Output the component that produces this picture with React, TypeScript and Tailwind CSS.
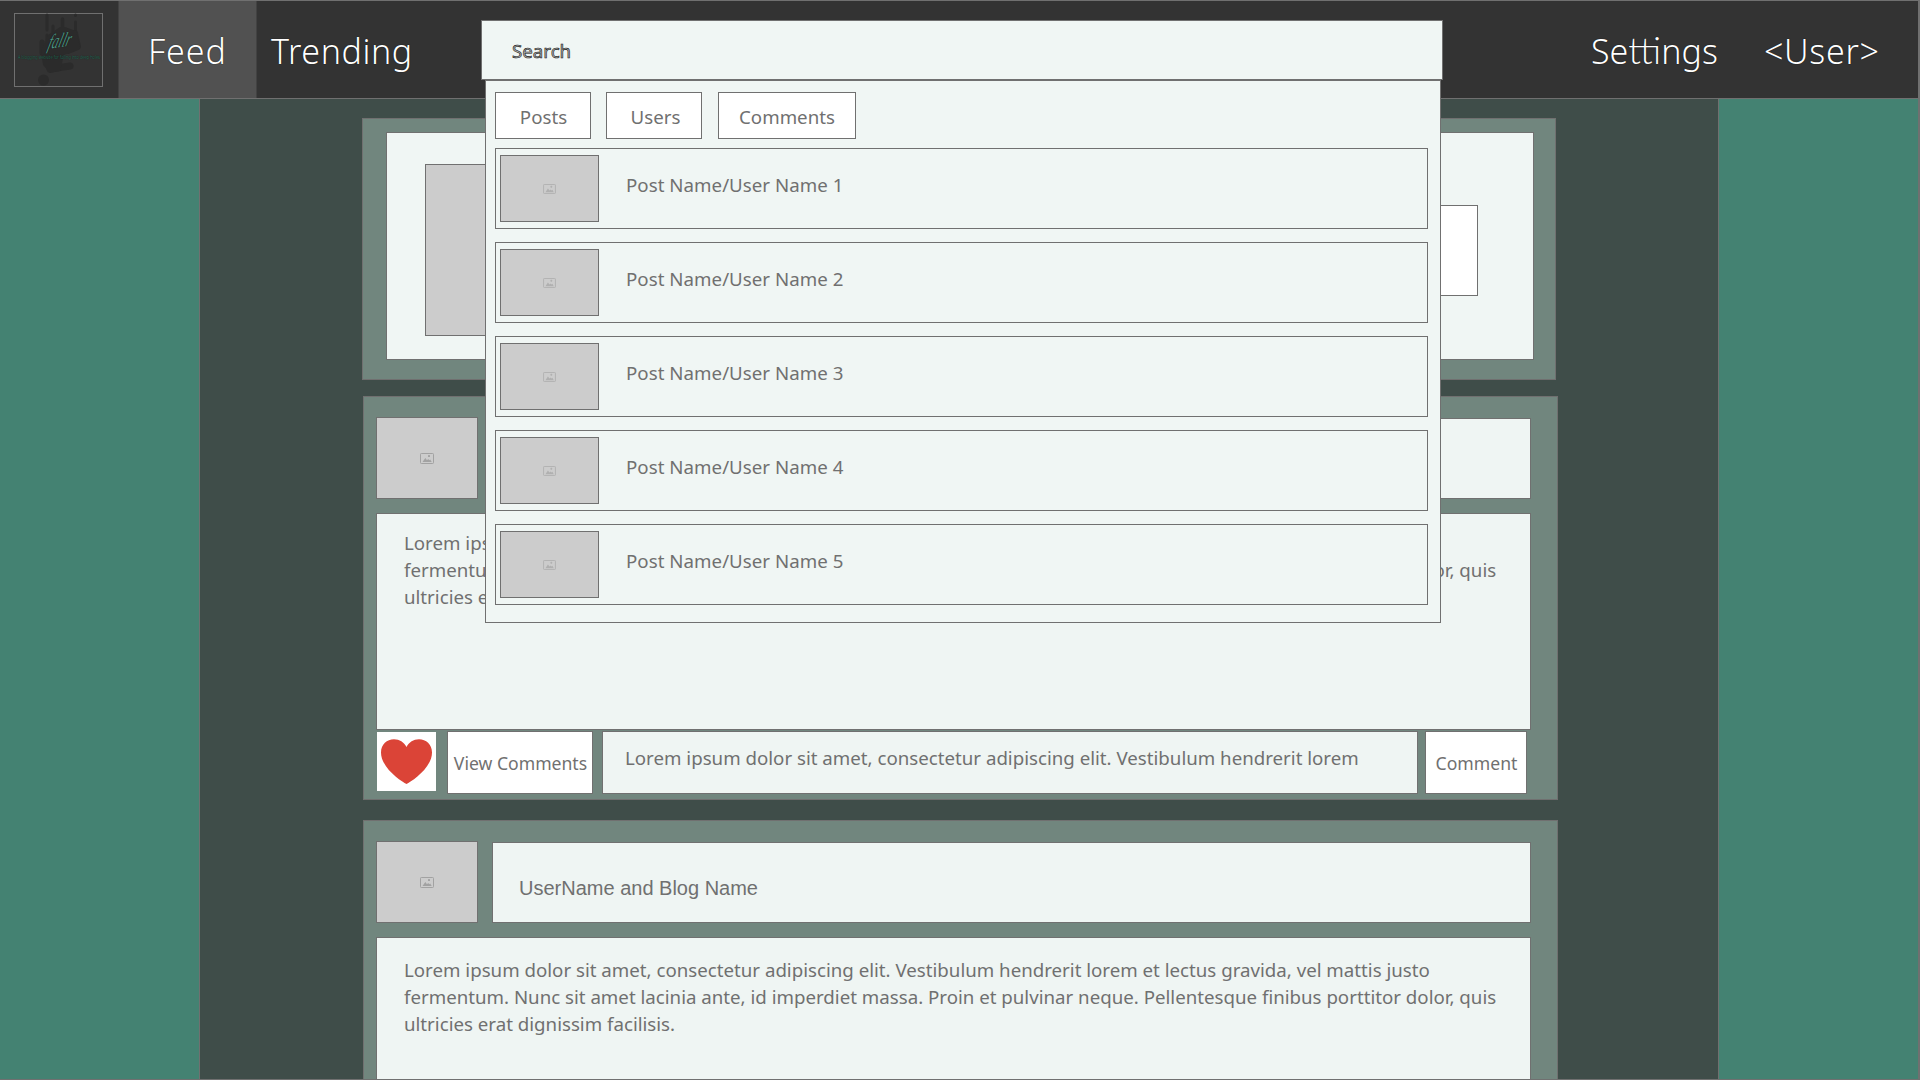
const LOREM_LINES = [
  "Lorem ipsum dolor sit amet, consectetur adipiscing elit. Vestibulum hendrerit lorem et lectus gravida, vel mattis justo",
  "fermentum. Nunc sit amet lacinia ante, id imperdiet massa. Proin et pulvinar neque. Pellentesque finibus porttitor dolor, quis",
  "ultricies erat dignissim facilisis.",
];

const RESULTS = [1, 2, 3, 4, 5];

function PictureIcon({ className }: { className: string }) {
  return (
    <svg viewBox="0 0 14 11" className={className} fill="none" aria-hidden="true">
      <rect x="0.5" y="0.5" width="13" height="10" rx="0.8" stroke="currentColor" />
      <path d="M2.5 9 L5.3 5 L7 7.2 L8.2 6 L9.3 7.2 L10.2 6.4 L11.7 9 Z" fill="currentColor" />
      <rect x="8" y="2" width="2" height="2" rx="0.6" fill="currentColor" />
    </svg>
  );
}

function Logo() {
  return (
    <svg viewBox="0 0 89 74" className="h-[74px] w-[89px] overflow-visible" aria-label="fallr">
      <rect x="0.5" y="0.5" width="88" height="73" fill="#333333" stroke="#707070" />
      <g stroke="#2b2b2b" strokeLinecap="round" fill="none">
        <path d="M33 2 V17 M33 22 V27" strokeWidth="3" />
        <path d="M39 13 V22" strokeWidth="3" />
        <path d="M48.5 6 V18" strokeWidth="3.4" />
        <path d="M61.500 9 V18 M61.500 2 V2.500" strokeWidth="3" />
        <path d="M28 29 V40" strokeWidth="5" />
        <path d="M34 40 L36 56 L56 53" strokeWidth="7" strokeLinejoin="round" />
        <path d="M54 38 L64 34 L61 20" strokeWidth="6" strokeLinejoin="round" />
      </g>
      <path
        d="M34 22 L46 14 H51 L62 18 L66 34 L50 42 L46 58 L36 60 L29 52 L27 38 Z"
        fill="#2b2b2b"
      />
      <circle cx="29.500" cy="67" r="5.500" fill="#2b2b2b" />
      <text
        transform="translate(33 36) rotate(-8) skewX(-24)"
        textLength="23"
        lengthAdjust="spacingAndGlyphs"
        className="[font-family:'Liberation_Serif',cursive] text-[20px] italic"
        fill="#4f9482"
      >
        fallr
      </text>
      <text
        x="4"
        y="46"
        textLength="82"
        lengthAdjust="spacingAndGlyphs"
        className="[font-family:'Noto_Sans',sans-serif] text-[4.5px]"
        fill="#2a8469"
      >
        A blogging website for falling into deep holes
      </text>
    </svg>
  );
}

function Header() {
  return (
    <header className="grid h-[99px] shrink-0 grid-cols-[118px_139px_224px_962px_1fr] border-y border-r-2 border-[#707070] bg-[#333333] [font-family:'Noto_Sans',sans-serif] text-[34px] leading-[40px] font-light text-white [text-shadow:0_0_1px_#000]">
      <div className="pt-[12px] pl-[14px]">
        <Logo />
      </div>
      <a className="border-x border-[#424242] bg-[#515151] pt-[30px] pl-[29px] tracking-[0.9px]">Feed</a>
      <a className="pt-[30px] pl-[14px] tracking-[0.6px]">Trending</a>
      <div className="mt-[19px] h-[60px] border border-[#707070] bg-[#f0f6f4] pt-[16px] pl-[30px] text-[18.7px] leading-[27px] font-normal text-[#b0b0b0] [-webkit-text-stroke:0.6px_#111] [text-shadow:none]">
        Search
      </div>
      <nav className="flex gap-[46px] pt-[30px] pl-[148px]">
        <a className="w-[127px] whitespace-nowrap">
          Se<span className="font-['Lato'] text-[37px] leading-none">tti</span>ngs
        </a>
        <a className="tracking-[0.7px] whitespace-nowrap">&lt;User&gt;</a>
      </nav>
    </header>
  );
}

function SearchDropdown() {
  return (
    <section className="absolute top-[80px] left-[485px] flex h-[543px] w-[956px] flex-col border border-[#707070] bg-[#f0f6f4] px-[9px] pt-[11px]">
      <div className="flex h-[47px]">
        <button className="w-[96px] border border-[#707070] bg-white pt-px pl-px">Posts</button>
        <button className="ml-[15px] w-[96px] border border-[#707070] bg-white pt-px pl-[3px]">Users</button>
        <button className="ml-[16px] w-[138px] border border-[#707070] bg-white pt-px">Comments</button>
      </div>
      <ul className="mt-[9px] flex w-[933px] flex-col gap-[13px]">
        {RESULTS.map((n) => (
          <li key={n} className="flex h-[81px] border border-[#707070] pt-[6px] pl-[4px]">
            <div className="flex h-[67px] w-[99px] items-center justify-center border border-[#707070] bg-[#cccccc]">
              <PictureIcon className="mt-px h-[10px] w-[13px] text-[#b0b0b0]" />
            </div>
            <span className="mt-[16px] ml-[27px] tracking-[0.03px]">Post Name/User Name {n}</span>
          </li>
        ))}
      </ul>
    </section>
  );
}

function PostHeading({ title }: { title: string }) {
  return (
    <div className="flex h-[82px] gap-[14px]">
      <div className="flex w-[102px] items-center justify-center border border-[#707070] bg-[#cccccc]">
        <PictureIcon className="h-[11px] w-[14px] text-[#a2a2a2]" />
      </div>
      <div className="mt-px w-[1039px] border border-[#707070] bg-[#eff5f3] pt-[32px] pl-[26px] font-['Liberation_Sans'] text-[20px] leading-[27px]">
        {title}
      </div>
    </div>
  );
}

function Lorem() {
  return (
    <>
      {LOREM_LINES.map((line) => (
        <p key={line} className="whitespace-nowrap">
          {line}
        </p>
      ))}
    </>
  );
}

function Heart() {
  return (
    <div className="mt-px h-[59px] w-[59px] bg-white">
      <svg viewBox="0 0 59 59" className="h-full w-full" aria-hidden="true">
        <path
          d="M29.500 52 C24.500 49.500 4 36 4 20.500 C4 12.500 10 7.300 17 7.300 C22.500 7.300 27 10.200 29.500 15 C32 10.200 36.500 7.300 42 7.300 C49 7.300 55 12.500 55 20.500 C55 36 34.500 49.500 29.500 52 Z"
          fill="#db4437"
        />
      </svg>
    </div>
  );
}

export default function App() {
  return (
    <div className="relative flex h-[1080px] w-[1920px] flex-col overflow-hidden bg-[#448272] [font-family:'Noto_Sans',sans-serif] text-[18.7px] leading-[27px] text-[#707070]">
      <Header />

      <div className="flex min-h-0 flex-1 border-r-2 border-b border-[#707070]">
        <main className="ml-[199px] w-[1520px] overflow-hidden border-x border-[#707070] bg-[#3f4d49] pt-[19px] pl-[162px]">
          <div className="flex h-[262px] w-[1194px] border border-[#707070] bg-[#71867e] pt-[13px] pl-[23px]">
            <div className="flex h-[228px] w-[1148px] justify-between border border-[#707070] bg-[#f0f6f4] pt-[31px] pr-[55px] pl-[38px]">
              <div className="h-[172px] w-[230px] border border-[#707070] bg-[#cccccc]" />
              <div className="mt-[41px] h-[91px] w-[600px] border border-[#707070] bg-white" />
            </div>
          </div>

          <article className="mt-[16px] ml-px h-[404px] w-[1195px] border border-[#707070] bg-[#71867e] pt-[20px] pl-[12px]">
            <PostHeading title="UserName and Blog Name" />
            <div className="mt-[14px] h-[217px] w-[1155px] border border-[#707070] bg-[#eff5f3] pt-[15px] pl-[27px]">
              <Lorem />
            </div>
            <div className="mt-px flex h-[63px]">
              <div className="w-[60px] pl-px">
                <Heart />
              </div>
              <button className="ml-[11px] w-[146px] border border-[#707070] bg-white pt-px pl-px text-[17.6px] whitespace-nowrap">
                View Comments
              </button>
              <div className="ml-[9px] w-[816px] border border-[#707070] bg-[#eff5f3] pt-[12px] pl-[22px]">
                Lorem ipsum dolor sit amet, consectetur adipiscing elit. Vestibulum hendrerit lorem
              </div>
              <button className="ml-[7px] w-[102px] border border-[#707070] bg-white pt-px pl-px text-[17.6px]">
                Comment
              </button>
            </div>
          </article>

          <article className="mt-[20px] ml-px h-[404px] w-[1195px] border border-[#707070] bg-[#71867e] pt-[20px] pl-[12px]">
            <PostHeading title="UserName and Blog Name" />
            <div className="mt-[14px] h-[217px] w-[1155px] border border-[#707070] bg-[#eff5f3] pt-[18px] pl-[27px]">
              <Lorem />
            </div>
          </article>
        </main>
      </div>

      <SearchDropdown />
    </div>
  );
}
